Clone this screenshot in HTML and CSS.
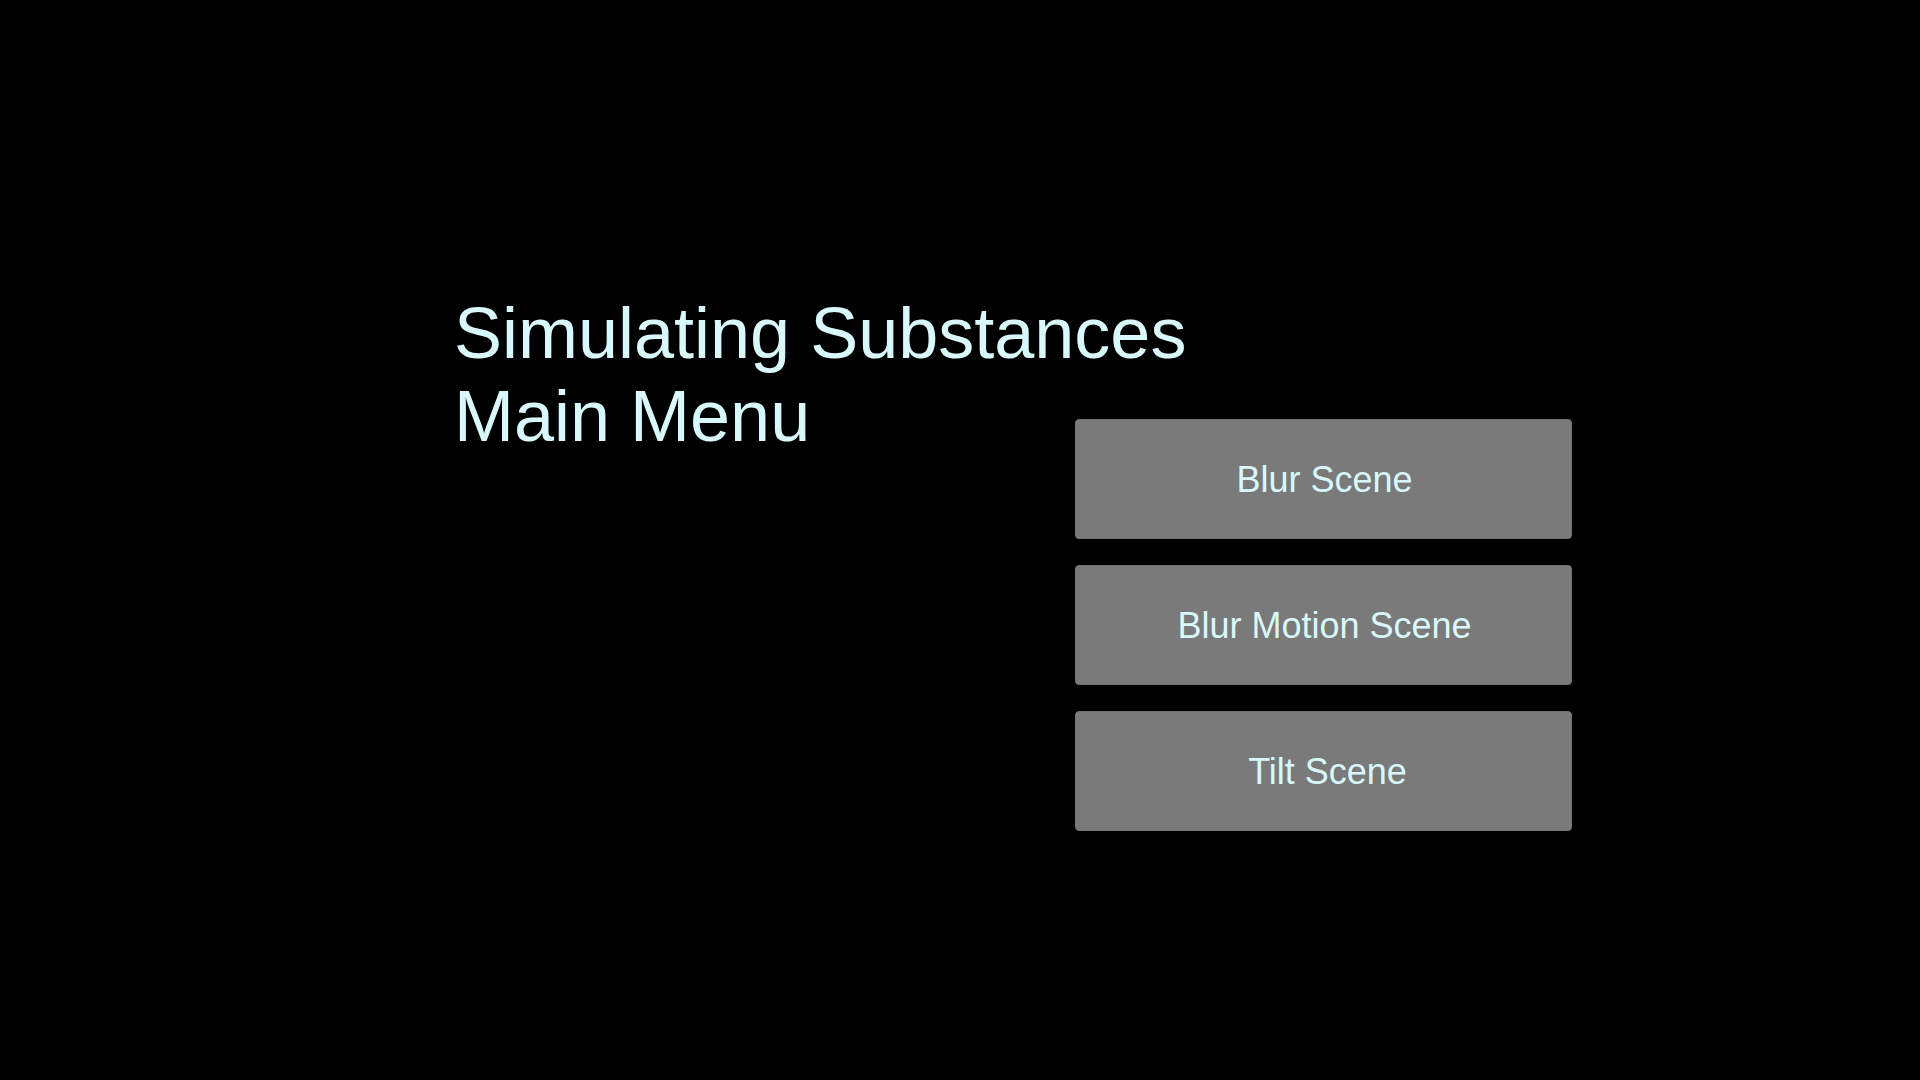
FILE: index.html
```html
<!DOCTYPE html>
<html>
<head>
<meta charset="utf-8">
<link rel="stylesheet" href="styles.css">
</head>
<body>
<main class="screen">
  <h1 class="title">Simulating Substances<br>Main Menu</h1>
  <nav class="menu">
    <button class="menu-btn">Blur Scene</button>
    <button class="menu-btn">Blur Motion Scene</button>
    <button class="menu-btn menu-btn-tilt">Tilt Scene</button>
  </nav>
</main>
</body>
</html>
```
FILE: styles.css
```css
html, body {
  margin: 0;
  padding: 0;
  background: #000;
  width: 1920px;
  height: 1080px;
  overflow: hidden;
}
.screen {
  display: flex;
  align-items: flex-start;
  padding: 292px 0 0 454px;
  box-sizing: border-box;
  height: 1080px;
  font-family: "Liberation Sans", Arial, sans-serif;
}
.title {
  margin: 0;
  width: 621px;
  flex: none;
  white-space: nowrap;
  font-weight: normal;
  font-size: 72px;
  line-height: 83px;
  color: #d8f8fb;
}
.menu {
  margin-top: 127px;
  width: 497px;
  display: flex;
  flex-direction: column;
  gap: 26.5px;
}
.menu-btn {
  height: 119.5px;
  margin: 0;
  padding: 2px 0 0 2px;
  border: 1px solid #717171;
  border-radius: 4px;
  background: #7a7a7a;
  color: #d8f8fb;
  font-family: "Liberation Sans", Arial, sans-serif;
  font-size: 36px;
}
.menu-btn-tilt {
  padding-left: 8px;
}
```
